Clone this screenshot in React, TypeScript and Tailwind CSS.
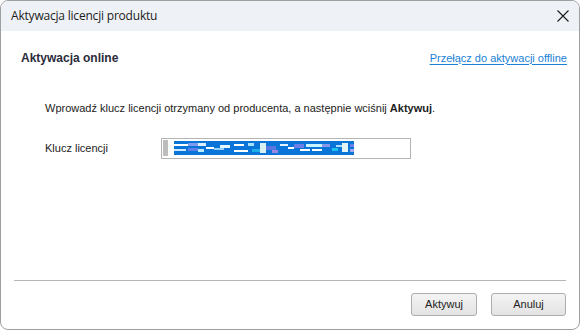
import React from "react";

const keyBlocks: [number, number, number, number, string][] = [
  [0, 3, 14, 2, "#ffffff"], [0, 8, 12, 2, "#cfe8ff"], [14, 2, 10, 3, "#7f9bf0"], [14, 7, 10, 3, "#5d7fe8"],
  [24, 2, 8, 3, "#dff0ff"], [24, 8, 6, 3, "#b8ecff"], [32, 6, 8, 2, "#ffffff"], [40, 7, 10, 2, "#8fd0ff"],
  [46, 4, 10, 3, "#e8f6ff"], [60, 3, 10, 2, "#ffffff"], [60, 9, 14, 2, "#ffffff"], [74, 2, 6, 3, "#a6e0ff"],
  [78, 8, 8, 3, "#1fb0e8"], [86, 2, 6, 10, "#d8f0f0"], [92, 5, 10, 4, "#5a76e0"], [98, 9, 6, 3, "#9a88e0"],
  [106, 3, 8, 2, "#e0f2ff"], [114, 6, 6, 2, "#ffffff"], [120, 3, 10, 4, "#6a7fe6"], [126, 8, 10, 2, "#ffffff"],
  [132, 3, 16, 3, "#c8f4ff"], [138, 8, 10, 2, "#ffffff"], [148, 3, 8, 3, "#8898e8"], [158, 7, 6, 3, "#1ec0f0"],
  [162, 4, 8, 2, "#aadcff"], [168, 2, 6, 9, "#e4f4f4"], [176, 3, 6, 3, "#6a80e4"], [176, 8, 6, 3, "#a0a8f0"],
];

export default function App() {
  const body = { fontFamily: '"Liberation Sans", Arial, sans-serif' };
  return (
    <div className="w-[580px] h-[330px] bg-white overflow-hidden">
      <div className="w-[580px] h-[330px] border border-[#9f9f9f] rounded-[8px] overflow-hidden flex flex-col bg-white">
        <div
          className="h-[30px] bg-[#eef2f7] flex items-center justify-between pl-[10px] pr-[8px] shrink-0"
          style={{ fontFamily: '"Open Sans", "Noto Sans", sans-serif' }}
        >
          <span className="text-[12px] text-[#1b1b1b] tracking-[-0.2px]">Aktywacja licencji produktu</span>
          <svg width="14" height="14" viewBox="0 0 14 14" className="mr-[1px]">
            <path d="M1.5 1.5 L12.5 12.5 M12.5 1.5 L1.5 12.5" stroke="#1b1b1b" strokeWidth="1.1" fill="none" />
          </svg>
        </div>
        <div className="flex-1 flex flex-col px-[12px]" style={body}>
          <div className="flex items-center justify-between h-[28px] mt-[13px] pl-[8px]">
            <span className="text-[12px] font-bold text-[#2b2b3a]">Aktywacja online</span>
            <a href="#" className="text-[11px] text-[#1a7fd6] underline underline-offset-[2px]">
              Przełącz do aktywacji offline
            </a>
          </div>
          <div className="pl-[32px] mt-[28px] text-[11px] text-[#222]">
            Wprowadź klucz licencji otrzymany od producenta, a następnie wciśnij <b>Aktywuj</b>.
          </div>
          <div className="flex items-center pl-[32px] mt-[21px]">
            <span className="w-[116px] text-[11px] text-[#222]">Klucz licencji</span>
            <div className="w-[250px] h-[21px] border border-[#b4b4b4] flex items-center pl-[1px]">
              <div className="w-[5px] h-[16px] bg-[#bdbdbd]" />
              <svg width="180" height="14" className="ml-[6px]">
                <rect x="0" y="0" width="180" height="14" fill="#0a74d8" />
                {keyBlocks.map(([x, y, w, h, c], i) => (
                  <rect key={i} x={x} y={y} width={w} height={h} fill={c} />
                ))}
              </svg>
            </div>
          </div>
          <div className="flex-1" />
          <div className="h-px bg-[#b5b5b5] mx-[1px]" />
          <div className="flex justify-end gap-[14px] pt-[12px] pb-[13px] pr-[1px]">
            <button className="w-[66px] h-[23px] rounded-[3px] border border-[#adadad] bg-gradient-to-b from-[#f4f4f4] to-[#e3e3e3] text-[11px] text-[#222]">
              Aktywuj
            </button>
            <button className="w-[75px] h-[23px] rounded-[3px] border border-[#adadad] bg-gradient-to-b from-[#f4f4f4] to-[#e3e3e3] text-[11px] text-[#222]">
              Anuluj
            </button>
          </div>
        </div>
      </div>
    </div>
  );
}
